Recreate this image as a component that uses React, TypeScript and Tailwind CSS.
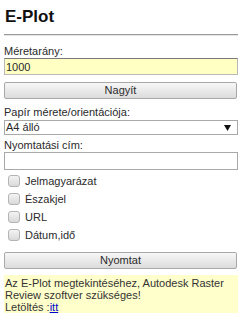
import { useState } from 'react';

function Check({ label }: { label: string }) {
  const [on, setOn] = useState(false);
  return (
    <label className="h-[18px] flex items-center cursor-pointer" onClick={() => setOn(!on)}>
      <span className="ml-[4px] w-[12px] h-[12px] rounded-[3px] border border-[#b4b4b4] bg-gradient-to-b from-[#f4f4f4] to-[#d9d9d9] flex items-center justify-center text-[9px] leading-none">
        {on ? '✓' : ''}
      </span>
      <span className="ml-[5px]">{label}</span>
    </label>
  );
}

export default function App() {
  const [scale, setScale] = useState('1000');
  const [title, setTitle] = useState('');

  return (
    <div className="w-[243px] h-[321px] bg-white px-[4px] pt-[6px] font-['Liberation_Sans',Arial,sans-serif] text-[11px] leading-[13px] text-[#2a2a2a]">
      <h1 className="h-[22px] leading-[22px] text-[17px] font-bold text-[#111] pl-[1px]">E-Plot</h1>
      <div className="mt-[6px] w-[234px] border-t border-[#9a9a9a] border-b border-b-[#e4e4e4]" />

      <div className="mt-[9px] h-[13px]">Méretarány:</div>
      <input
        value={scale}
        onChange={e => setScale(e.target.value)}
        className="block w-[234px] h-[17px] px-[1px] bg-[#ffffc4] border border-[#b8b8b8] border-t-[#7a7a7a] text-[11px] outline-none"
      />
      <button className="mt-[7px] block w-[233px] h-[17px] rounded-[2px] border border-[#a8a8a8] bg-gradient-to-b from-[#f7f7f7] to-[#dcdcdc] text-[11px] leading-[15px]">
        Nagyít
      </button>

      <div className="mt-[7px] h-[13px]">Papír mérete/orientációja:</div>
      <div className="mt-[1px] w-[234px] h-[15px] border border-[#a9a9a9] bg-white flex items-center justify-between pl-[1px] pr-[6px]">
        <span>A4 álló</span>
        <svg width="7" height="6" viewBox="0 0 7 6">
          <path d="M0 0 H7 L3.5 6 Z" fill="#111" />
        </svg>
      </div>

      <div className="mt-[4px] h-[13px]">Nyomtatási cím:</div>
      <input
        value={title}
        onChange={e => setTitle(e.target.value)}
        className="block w-[234px] h-[18px] px-[1px] bg-white border border-[#a9a9a9] text-[11px] outline-none"
      />

      <div className="mt-[2px] flex flex-col">
        <Check label="Jelmagyarázat" />
        <Check label="Északjel" />
        <Check label="URL" />
        <Check label="Dátum,idő" />
      </div>

      <button className="mt-[8px] block w-[233px] h-[17px] rounded-[2px] border border-[#a8a8a8] bg-gradient-to-b from-[#f7f7f7] to-[#dcdcdc] text-[11px] leading-[15px]">
        Nyomtat
      </button>

      <div className="mt-[6px] w-[234px] h-[38px] bg-[#ffffcc] pt-[2px] px-[1px] leading-[12px] text-[#333]">
        Az E-Plot megtekintéséhez, Autodesk Raster Review szoftver szükséges!
        <br />
        Letöltés :<a href="#" className="text-[#0000cc] underline">itt</a>
      </div>
    </div>
  );
}
